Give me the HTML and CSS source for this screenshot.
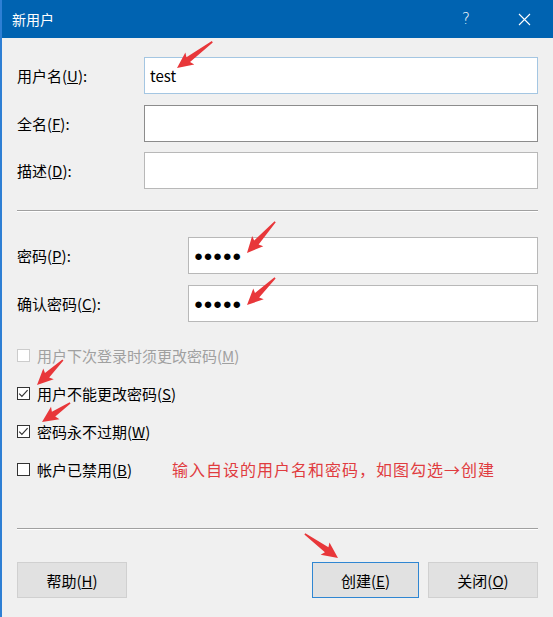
FILE: index.html
```html
<!DOCTYPE html>
<html lang="zh-CN">
<head>
<meta charset="utf-8">
<title>新用户</title>
<link rel="stylesheet" href="styles.css">
</head>
<body>
<div class="window">
  <div class="titlebar">
    <span class="title">新用户</span>
    <span class="help">?</span>
    <span class="close">
      <svg width="13" height="13" viewBox="0 0 13 13"><path d="M1 1 L12 12 M12 1 L1 12" stroke="#fff" stroke-width="1.1" fill="none"/></svg>
    </span>
  </div>
  <div class="content">
    <div class="fields fields-a">
      <label class="lbl">用户名(<u>U</u>):</label>
      <div class="input focus"><span class="val">test</span></div>
      <label class="lbl">全名(<u>F</u>):</label>
      <div class="input dark"></div>
      <label class="lbl">描述(<u>D</u>):</label>
      <div class="input light"></div>
    </div>
    <div class="sep sep-1"></div>
    <div class="fields fields-b">
      <label class="lbl">密码(<u>P</u>):</label>
      <div class="input light"><span class="dots">●●●●●</span></div>
      <label class="lbl">确认密码(<u>C</u>):</label>
      <div class="input light"><span class="dots">●●●●●</span></div>
    </div>
    <div class="checks">
      <div class="check disabled"><span class="box"></span><span>用户下次登录时须更改密码(<u>M</u>)</span></div>
      <div class="check"><span class="box"><svg width="13" height="13" viewBox="0 0 13 13"><polyline points="2.2,6.6 4.9,9.3 10.6,3.2" fill="none" stroke="#333" stroke-width="1.2"/></svg></span><span>用户不能更改密码(<u>S</u>)</span></div>
      <div class="check"><span class="box"><svg width="13" height="13" viewBox="0 0 13 13"><polyline points="2.2,6.6 4.9,9.3 10.6,3.2" fill="none" stroke="#333" stroke-width="1.2"/></svg></span><span>密码永不过期(<u>W</u>)</span></div>
      <div class="check last">
        <div class="check-inner"><span class="box"></span><span>帐户已禁用(<u>B</u>)</span></div>
        <span class="note">输入自设的用户名和密码，如图勾选→创建</span>
      </div>
    </div>
    <div class="sep sep-2"></div>
    <div class="buttons">
      <button class="btn">帮助(<u>H</u>)</button>
      <div class="btn-group">
        <button class="btn default">创建(<u>E</u>)</button>
        <button class="btn">关闭(<u>O</u>)</button>
      </div>
    </div>
  </div>
</div>
<svg class="arrows" width="553" height="617" viewBox="0 0 553 617">
  <g fill="#e8373a">
    <polygon transform="translate(177,68) rotate(143.4)" points="-44,-0.8 -14,-3 -16,-7.5 0,0 -16,7.5 -14,3 -44,0.8"/>
    <polygon transform="translate(247,253) rotate(132.1)" points="-42,-0.8 -14,-3 -16,-7.5 0,0 -16,7.5 -14,3 -42,0.8"/>
    <polygon transform="translate(247,305) rotate(136)" points="-39,-0.8 -14,-3 -16,-7.5 0,0 -16,7.5 -14,3 -39,0.8"/>
    <polygon transform="translate(37,385) rotate(136)" points="-36,-0.8 -14,-3 -16,-7.5 0,0 -16,7.5 -14,3 -36,0.8"/>
    <polygon transform="translate(42,422) rotate(145.8)" points="-34,-0.8 -14,-3 -16,-7.5 0,0 -16,7.5 -14,3 -34,0.8"/>
    <polygon transform="translate(338,558) rotate(36)" points="-41,-0.8 -14,-3 -16,-7.5 0,0 -16,7.5 -14,3 -41,0.8"/>
  </g>
</svg>
</body>
</html>
```

FILE: styles.css
```css
html, body {
  margin: 0;
  padding: 0;
}
body {
  width: 553px;
  height: 617px;
  overflow: hidden;
  background: #f0f0f0;
  font-family: "Noto Sans CJK SC", "Noto Sans", sans-serif;
  font-size: 15px;
  color: #000;
  position: relative;
}
.window {
  height: 617px;
  border-left: 2px solid #2e7fd4;
  box-sizing: border-box;
}
.titlebar {
  height: 38px;
  background: #0063b1;
  color: #fff;
  display: flex;
  align-items: center;
  padding-left: 10px;
}
.title {
  font-size: 14px;
  flex: 1;
}
.help {
  font-family: "DejaVu Sans", sans-serif;
  font-size: 15px;
  font-weight: 300;
  width: 20px;
  text-align: center;
  margin-right: 42px;
}
.close {
  display: flex;
  margin-right: 22px;
}
.content {
  padding: 19px 15px 0 15px;
}
.fields {
  display: grid;
  align-items: center;
}
.fields-a {
  grid-template-columns: 127px 1fr;
  grid-auto-rows: 37px;
  row-gap: 10.5px;
}
.fields-b {
  grid-template-columns: 171px 1fr;
  grid-auto-rows: 37px;
  row-gap: 11px;
  margin-top: 25px;
}
.lbl {
  white-space: nowrap;
}
.input {
  height: 37px;
  box-sizing: border-box;
  background: #fff;
  border: 1px solid #b4b4b4;
  display: flex;
  align-items: center;
  padding-left: 5px;
}
.input.focus {
  border-color: #a4c6e2;
}
.input.dark {
  border-color: #8c8c8c;
}
.input.light {
  border-color: #b8b8b8;
}
.val {
  font-size: 15px;
}
.dots {
  font-family: "Liberation Sans", sans-serif;
  font-size: 15px;
  letter-spacing: 0.5px;
}
.sep {
  border-top: 1px solid #a0a0a0;
  border-bottom: 1px solid #ffffff;
}
.sep-1 {
  margin-top: 21px;
}
.checks {
  margin-top: 23px;
  display: flex;
  flex-direction: column;
  gap: 18px;
}
.check {
  height: 20px;
  display: flex;
  align-items: center;
  gap: 7px;
  white-space: nowrap;
}
.check.last {
  margin-top: -2px;
  display: grid;
  grid-template-columns: 155px 1fr;
  gap: 0;
}
.check-inner {
  display: flex;
  align-items: center;
  gap: 7px;
}
.box {
  width: 13px;
  height: 13px;
  box-sizing: border-box;
  border: 1px solid #333;
  background: #fff;
  display: flex;
  position: relative;
}
.box svg {
  position: absolute;
  left: -1px;
  top: -1px;
}
.check.disabled {
  color: #a0a0a0;
}
.check.disabled .box {
  border-color: #cccccc;
}
.note {
  color: #e03c3f;
  font-size: 16px;
  letter-spacing: 1px;
}
.sep-2 {
  margin-top: 51px;
}
.buttons {
  margin-top: 32px;
  display: flex;
  justify-content: space-between;
}
.btn-group {
  display: flex;
  gap: 9px;
}
.btn {
  width: 110px;
  height: 36px;
  background: #e1e1e1;
  border: 1px solid #d0d0d0;
  font-family: "Noto Sans CJK SC", "Noto Sans", sans-serif;
  font-size: 15px;
  color: #000;
  padding: 0;
}
.btn.default {
  width: 107px;
  border-color: #2f86d2;
}
.arrows {
  position: absolute;
  left: 0;
  top: 0;
  pointer-events: none;
}
```
